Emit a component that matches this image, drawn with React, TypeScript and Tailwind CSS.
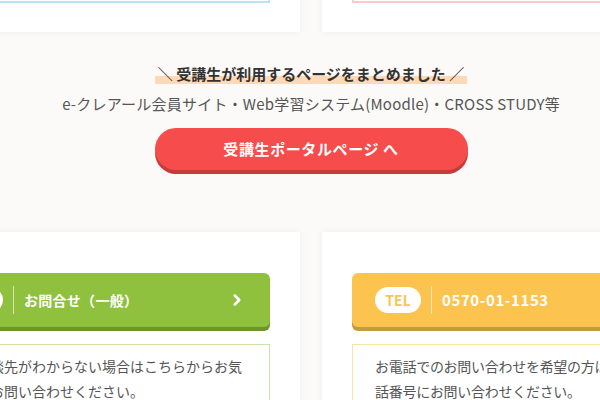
import React from 'react';
import { ChevronRight } from 'lucide-react';

export default function App() {
  const contacts = [
    {
      badge: 'MAIL',
      label: 'お問合せ（一般）',
      arrow: true,
      bg: 'bg-[#8fc13e]',
      shadow: 'shadow-[0_4px_0_#6c9628]',
      badgeText: 'text-[#8fc13e]',
      border: 'border-[#cbe3a2] pl-[27px] pr-[22px]',
      labelClass: 'text-[14px] tracking-[0.02em]',
      text: 'ご相談先がわからない場合はこちらからお気軽にお問い合わせください。'
    },
    {
      badge: 'TEL',
      label: '0570-01-1153',
      arrow: false,
      bg: 'bg-[#fcc44f]',
      shadow: 'shadow-[0_4px_0_#c39a3f]',
      badgeText: 'text-[#fcc44f]',
      border: 'border-[#fde3a6] pl-[22px] pr-[30px] tracking-[-0.02em]',
      labelClass: 'text-[15px] tracking-[0.04em]',
      text: 'お電話でのお問い合わせを希望の方は下記電話番号にお問い合わせください。'
    }
  ];

  return (
    <div className="min-h-screen overflow-hidden bg-[#fbfaf8] font-['Noto_Sans_CJK_JP',sans-serif]">
      <div className="ml-[-96px] w-[814px]">
        {/* Top cards (cut off) */}
        <div className="grid grid-cols-2 gap-[22px]">
          <div className="h-[32px] bg-white px-[30px] shadow-[0_0_8px_rgba(0,0,0,0.05)]">
            <div className="h-[3px] border-x-2 border-b-2 border-[#bfe4f1]"></div>
          </div>
          <div className="h-[32px] bg-white px-[30px] shadow-[0_0_8px_rgba(0,0,0,0.05)]">
            <div className="h-[3px] border-x-2 border-b-2 border-[#fccaca]"></div>
          </div>
        </div>

        {/* Portal link */}
        <div className="text-center">
          <p className="mt-[31px] text-[15px] font-bold leading-[22px] text-[#333]">
            <span className="bg-[linear-gradient(transparent_63%,#fdd9b7_63%)] px-[3px]">
              ＼ 受講生が利用するページをまとめました ／
            </span>
          </p>
          <p className="mt-[8px] text-[15px] leading-[22px] tracking-[0.015em] text-[#555]">
            e-クレアール会員サイト・Web学習システム(Moodle)・CROSS STUDY等
          </p>
          <div className="mx-auto mt-[13px] flex h-[42px] w-[313px] items-center justify-center rounded-full bg-[#f74c4c] text-[15px] font-bold tracking-[0.04em] text-white shadow-[0_4px_0_#c63a3a]">
            受講生ポータルページ へ
          </div>
        </div>

        {/* Contact cards */}
        <div className="mt-[62px] grid grid-cols-2 gap-[22px]">
          {contacts.map((c, i) => (
            <div key={i} className="h-[200px] bg-white px-[30px] pt-[41px] shadow-[0_0_8px_rgba(0,0,0,0.05)]">
              <div className={`flex h-[54px] items-center rounded-md pl-[23px] pr-[24px] ${c.bg} ${c.shadow}`}>
                <span className={`flex h-[26px] w-[46px] items-center justify-center rounded-full bg-white text-[14px] font-bold ${c.badgeText}`}>
                  {c.badge}
                </span>
                <span className="mx-[10px] h-[28px] w-px bg-white/60"></span>
                <span className={`flex-1 font-bold text-white ${c.labelClass}`}>{c.label}</span>
                {c.arrow && <ChevronRight className="h-[18px] w-[18px] text-white" strokeWidth={3.5} />}
              </div>
              <div className={`mt-[17px] border ${c.border} pt-[9px] pb-4 text-[14px] leading-[25px] text-[#555]`}>
                {c.text}
              </div>
            </div>
          ))}
        </div>
      </div>
    </div>
  );
}
